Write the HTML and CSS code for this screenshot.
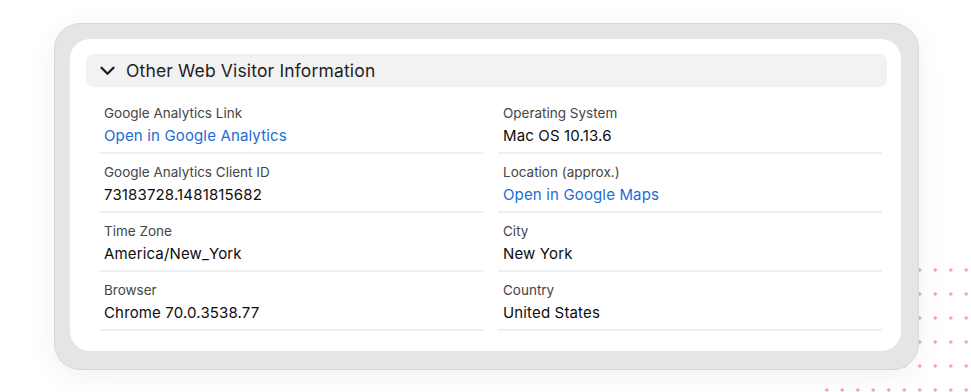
FILE: index.html
```html
<!DOCTYPE html>
<html>
<head>
<meta charset="utf-8">
<link rel="stylesheet" href="styles.css">
</head>
<body>
<div class="dots"></div>
<div class="stage">
  <div class="card">
    <div class="panel">
      <div class="section-head">
        <svg class="chev" width="15" height="10" viewBox="0 0 15 10"><path d="M1.5 1.8 L7.5 7.8 L13.5 1.8" fill="none" stroke="#1c1c1c" stroke-width="2.3" stroke-linecap="round" stroke-linejoin="round"/></svg>
        <span class="section-title">Other Web Visitor Information</span>
      </div>
      <div class="grid">
        <div class="row"><div class="label">Google Analytics Link</div><div class="value link">Open in Google Analytics</div></div>
        <div class="row"><div class="label">Operating System</div><div class="value">Mac OS 10.13.6</div></div>
        <div class="row"><div class="label">Google Analytics Client ID</div><div class="value">73183728.1481815682</div></div>
        <div class="row"><div class="label">Location (approx.)</div><div class="value link">Open in Google Maps</div></div>
        <div class="row"><div class="label">Time Zone</div><div class="value">America/New_York</div></div>
        <div class="row"><div class="label">City</div><div class="value">New York</div></div>
        <div class="row"><div class="label">Browser</div><div class="value">Chrome 70.0.3538.77</div></div>
        <div class="row"><div class="label">Country</div><div class="value">United States</div></div>
      </div>
    </div>
  </div>
</div>
</body>
</html>
```

FILE: styles.css
```css
html, body {
  margin: 0;
  padding: 0;
  background: #ffffff;
  width: 971px;
  height: 392px;
  overflow: hidden;
  font-family: "Inter", "Open Sans", sans-serif;
}
.dots {
  position: absolute;
  left: 819px;
  top: 258px;
  width: 160px;
  height: 140px;
  background-image: radial-gradient(circle, #f0a0a0 0 1.4px, transparent 1.8px);
  background-size: 15.5px 24px;
}
.stage {
  position: relative;
  padding: 23px 0 0 54px;
}
.card {
  width: 831px;
  height: 313px;
  padding: 16px;
  background: #e5e5e5;
  border: 1px solid #d9d9d9;
  border-radius: 26px;
  box-shadow: 0 6px 30px rgba(0,0,0,0.06);
}
.panel {
  width: 831px;
  height: 312px;
  margin: -1px 0 0 -1px;
  background: #ffffff;
  border-radius: 20px;
  padding: 15px 0 0 0;
  box-sizing: border-box;
}
.section-head {
  margin: 0 14px 0 16px;
  height: 33px;
  background: #f2f2f2;
  border-radius: 7px;
  display: flex;
  align-items: center;
  gap: 11px;
  padding-left: 14px;
}
.chev { display: block; margin-top: 1px; }
.section-title {
  font-size: 17.5px;
  color: #1e1e1e;
  letter-spacing: 0.15px;
}
.grid {
  display: grid;
  grid-template-columns: 384px 384px;
  column-gap: 15px;
  margin: 8px 19px 0 29px;
}
.row {
  padding: 8px 0 4px 5px;
  border-bottom: 2px solid #f0f0f0;
}
.label {
  font-size: 13.5px;
  line-height: 20px;
  color: #454545;
}
.value {
  margin-top: 1px;
  font-size: 15px;
  line-height: 24px;
  color: #0d0d0d;
  font-weight: 400;
  letter-spacing: 0.15px;
}
.value.link { color: #1a6dd6; }
```
